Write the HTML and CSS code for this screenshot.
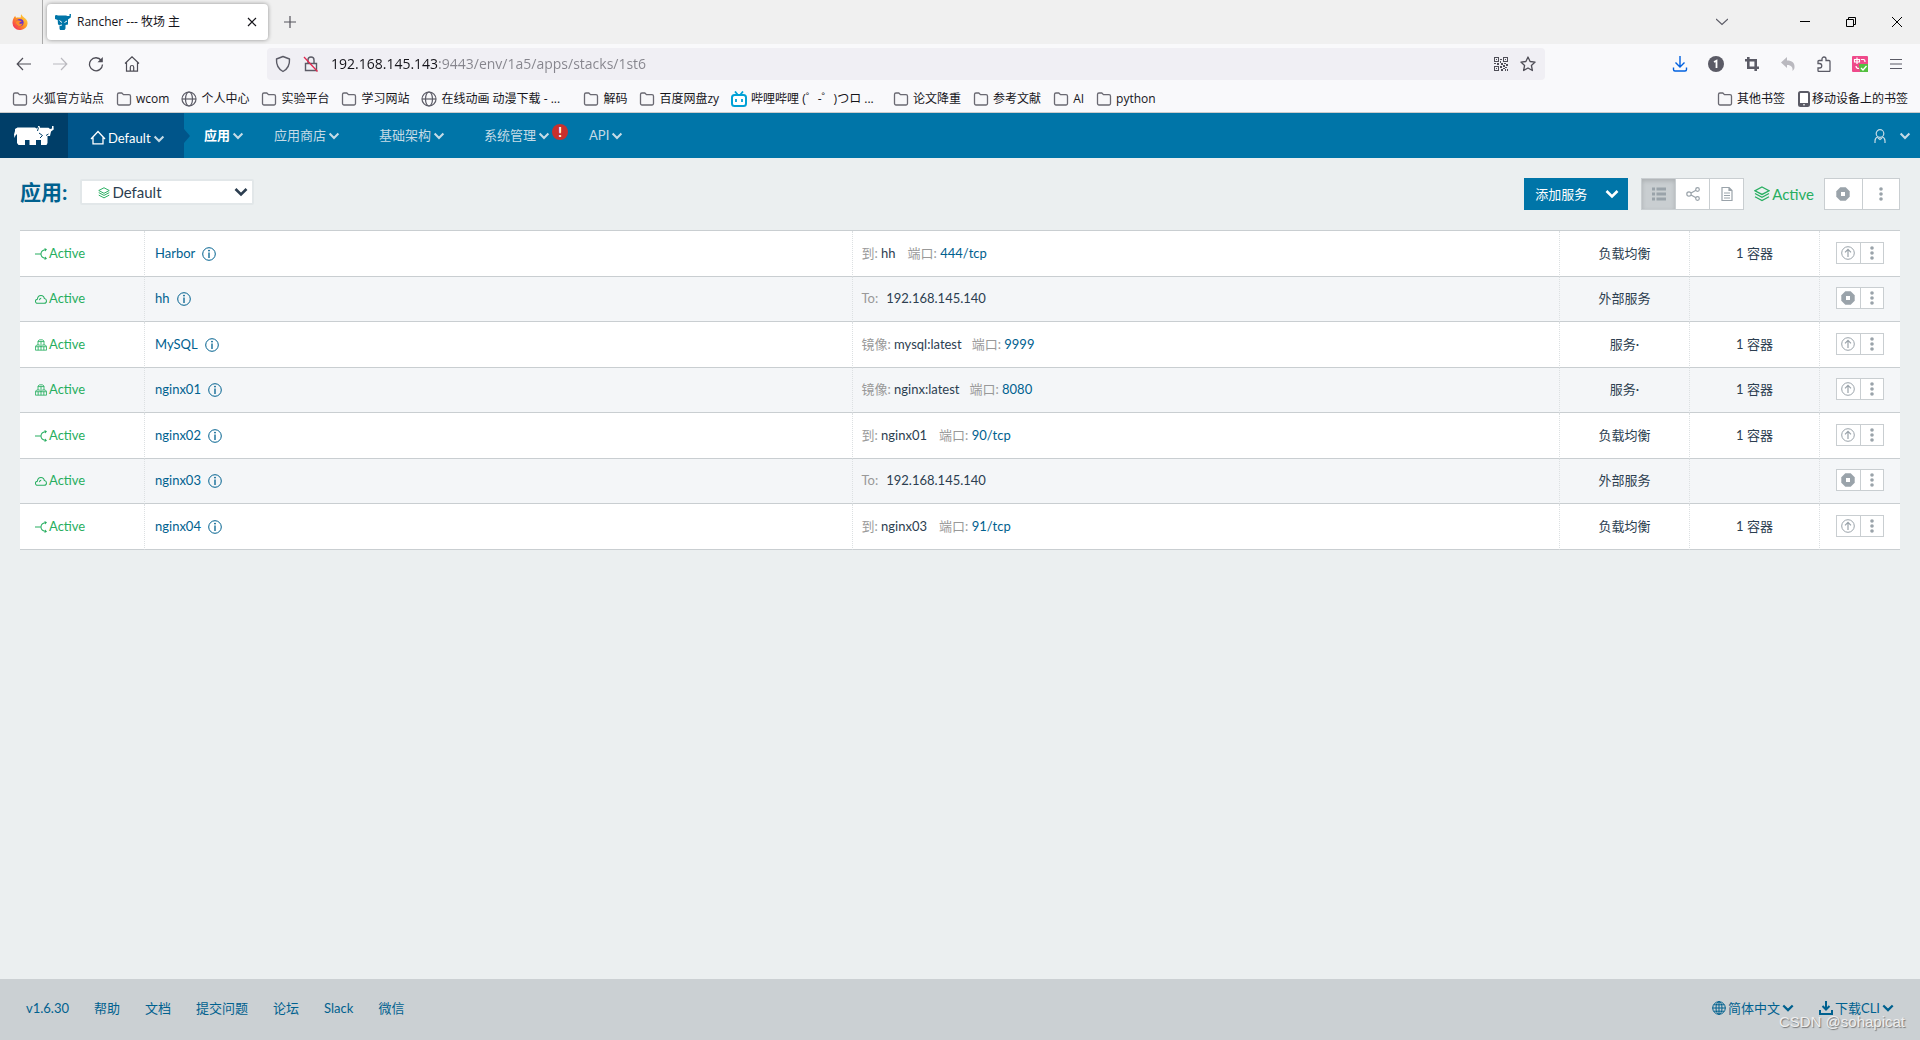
FILE: index.html
```html
<!DOCTYPE html>
<html lang="zh-CN">
<head>
<meta charset="utf-8">
<title>Rancher --- 牧场 主</title>
<link rel="stylesheet" href="styles.css">
</head>
<body>
<svg class="defs" aria-hidden="true">
  <symbol id="folder" viewBox="0 0 16 16"><path d="M1.5 12.5v-9a1.5 1.5 0 0 1 1.500-1.500h2.800l1.700 1.700h5.500a1.500 1.500 0 0 1 1.500 1.500v7.300a1.500 1.500 0 0 1-1.500 1.500h-10a1.500 1.500 0 0 1-1.500-1.500z" fill="#f7f7f9" stroke="#6a6972" stroke-width="1.300"/></symbol>
  <symbol id="globe" viewBox="0 0 16 16"><g fill="none" stroke="#5b5b66" stroke-width="1.200"><circle cx="8" cy="8" r="7"/><ellipse cx="8" cy="8" rx="3.500" ry="7"/><path d="M1 8h14"/></g></symbol>
  <symbol id="webglobe" viewBox="0 0 14 14"><g fill="none" stroke="currentColor"><circle cx="7" cy="7" r="6.300"/><ellipse cx="7" cy="7" rx="3" ry="6.300"/><path d="M.500 7h13M7 .500v13M1.800 3.800h10.400M1.800 10.200h10.400"/></g></symbol>
  <symbol id="chev" viewBox="0 0 14 10"><path d="M1.500 2l5.500 5.500L12.500 2" fill="none" stroke="currentColor" stroke-width="2.600"/></symbol>
  <symbol id="balancer" viewBox="0 0 14 14"><path d="M0 7h6.500M12 2C9 2.500 7 4.300 7 7s2 4.500 5 5" fill="none" stroke="currentColor" stroke-width="1.200"/><path d="M11 0l3 1.500-2 2.500zM11 14l3-1.500L12 10z" fill="currentColor"/></symbol>
  <symbol id="cloud" viewBox="0 0 14 14"><path d="M3 12a2.300 2.300 0 0 1-.3-4.600C3 4.800 4.600 2.800 7 2.800s3.600 1.600 3.900 3.700c1.500.2 2.500 1.300 2.500 2.800 0 1.600-1 2.700-2.600 2.700zM5.300 8.300a2 2 0 0 1 2-2.200" fill="none" stroke="currentColor" stroke-width="1.200"/></symbol>
  <symbol id="boxes" viewBox="0 0 14 14"><g fill="none" stroke="currentColor"><path d="M3.500 7V2.500L5 1h4l1.500 1.500V7M3.500 3h7M7 3v4"/><path d="M.500 13V8.500L2 7h3l2 1.500L9 7h3l1.500 1.500V13zM.500 9h13M7 8.500V13M3.700 9v4M10.300 9v4"/></g></symbol>
  <symbol id="layers" viewBox="0 0 16 16"><path d="M8 1l7 3.700-7 3.700-7-3.700zM1 7.500l7 3.700 7-3.700M1 10.800l7 3.700 7-3.700" fill="none" stroke="currentColor" stroke-width="1.300"/></symbol>
  <symbol id="info" viewBox="0 0 14 14"><circle cx="7" cy="7" r="6.300" fill="none" stroke="currentColor"/><path d="M7 5.500V11" fill="none" stroke="currentColor" stroke-width="1.300"/><circle cx="7" cy="3.600" r=".9" fill="currentColor"/></symbol>
  <symbol id="up" viewBox="0 0 14 14"><circle cx="7" cy="7" r="6.300" fill="none" stroke="currentColor"/><path d="M7 11V3.500M4 6.300l3-3 3 3" fill="none" stroke="currentColor" stroke-width="1.200"/></symbol>
  <symbol id="stop" viewBox="0 0 14 14"><path d="M4.300.3h5.400l4 4v5.400l-4 4H4.300l-4-4V4.300z" fill="currentColor"/><path d="M5 5h4v4H5z" fill="#fff"/></symbol>
  <symbol id="dots" viewBox="0 0 4 14"><g fill="currentColor"><circle cx="2" cy="2" r="1.800"/><circle cx="2" cy="7" r="1.800"/><circle cx="2" cy="12" r="1.800"/></g></symbol>
</svg>

<header class="browser">
  <div class="tabs">
    <div class="pin">
      <svg width="16" height="16" viewBox="0 0 16 16"><defs><linearGradient id="fx" x1="1" y1="0" x2="0" y2="1"><stop offset="0" stop-color="#ffe34a"/><stop offset=".5" stop-color="#ff9321"/><stop offset="1" stop-color="#f4136b"/></linearGradient></defs><path d="M9.500.2c.5 1.800 1.500 2.200 2.500 3.300 1.800 1.200 3.600 3 3.600 5.700A7.400 6.800 0 0 1 .5 9C.4 6.500 1.500 3.500 3.300 1.800c0 .9.300 1.500.9 2C5.700 3.300 8 3.500 9 3.200 8.600 2 8.700 1 9.500.2z" fill="url(#fx)"/><circle cx="7.900" cy="8.600" r="3.700" fill="#6a35c9"/><path d="M4.600 6.500c1.500-.6 2.500 0 3.500.2L9.700 7c-.4 1.200-2 1-2.600 2 .7 1.200 2.400 1 3.500.2-.3 2.400-2.700 3.600-4.700 2.600-1.900-.9-2.600-3.300-1.300-5.300z" fill="#ff8a2a"/></svg>
    </div>
    <div class="tab">
      <svg width="16" height="16" viewBox="0 0 16 16"><path d="M0 1.500L1.500 1 3 1.500h8l1.500.5L14.500 2V0H16l-.2 3.500L13 5.500v5l-2.500.5v3.500l-1 1.500H5l-.5-1.500V11L3 10.500 2.700 6 0 5z" fill="#0075a8"/><path d="M4.500 6.500l2.500 2M9.500 8.500L12 7M4.500 11.500L7 11" stroke="#fff" fill="none"/></svg>
      <span class="tab-title">Rancher --- 牧场 主</span>
      <button class="bare" aria-label="关闭"><svg width="10" height="10" viewBox="0 0 10 10"><path d="M1 1l8 8M9 1L1 9" stroke="#15141a" stroke-width="1.200"/></svg></button>
    </div>
    <button class="bare newtab" aria-label="新建标签页"><svg width="12" height="12" viewBox="0 0 12 12"><path d="M6 0v12M0 6h12" stroke="#55545c" stroke-width="1.200"/></svg></button>
    <div class="window">
      <button class="bare" aria-label="列出标签页"><svg width="12" height="12" viewBox="0 0 12 12"><path d="M0 3l6 5.500L12 3" fill="none" stroke="#5b5b66" stroke-width="1.200"/></svg></button>
      <button class="bare first" aria-label="最小化"><svg width="10" height="10" viewBox="0 0 10 10"><path d="M0 4.500h10" stroke="#000"/></svg></button>
      <button class="bare" aria-label="还原"><svg width="10" height="10" viewBox="0 0 10 10"><path d="M.500 2.500h7v7h-7zM2.500 2.500v-2h7v7h-2" fill="none" stroke="#000"/></svg></button>
      <button class="bare" aria-label="关闭窗口"><svg width="10" height="10" viewBox="0 0 10 10"><path d="M0 0l10 10M10 0L0 10" stroke="#000"/></svg></button>
    </div>
  </div>

  <div class="toolbar">
    <div class="nav">
      <button class="bare" aria-label="后退"><svg width="16" height="14" viewBox="0 0 16 14"><path d="M15 7H1.500M7 1L1.200 7 7 13" fill="none" stroke="#4f4e57" stroke-width="1.200"/></svg></button>
      <button class="bare" aria-label="前进"><svg width="16" height="14" viewBox="0 0 16 14"><path d="M1 7h13.500M9 1l5.800 6L9 13" fill="none" stroke="#bab9bf" stroke-width="1.200"/></svg></button>
      <button class="bare" aria-label="刷新"><svg width="16" height="16" viewBox="0 0 16 16"><path d="M13.300 4.500A6.500 6.500 0 1 0 14.500 8.500" fill="none" stroke="#4f4e57" stroke-width="1.300"/><path d="M14.800 1v5.200H9.500z" fill="#4f4e57"/></svg></button>
      <button class="bare" aria-label="主页"><svg width="16" height="16" viewBox="0 0 16 16"><path d="M1 7.500l7-6.700 7 6.700M2.500 6.500v8.700h11V6.500M6.300 15v-3.800a1.700 1.700 0 0 1 3.400 0V15" fill="none" stroke="#4f4e57" stroke-width="1.200"/></svg></button>
    </div>
    <div class="address">
      <svg width="16" height="18" viewBox="0 0 16 18"><path d="M8 1.500L14.500 4c.3 5-1.500 9.800-6.500 12.500C3 13.800 1.200 9 1.500 4z" fill="none" stroke="#5b5b66" stroke-width="1.400" stroke-linejoin="round"/></svg>
      <svg width="16" height="18" viewBox="0 0 16 18"><path d="M2.500 8.500h11v7h-11zM5 8.500V5a3 3 0 0 1 6 0v3.500" fill="none" stroke="#5b5b66" stroke-width="1.400"/><path d="M1 2l13.500 14.500" stroke="#e22850" stroke-width="1.300"/></svg>
      <input class="url" type="text" aria-label="地址" value="192.168.145.143:9443/env/1a5/apps/stacks/1st6">
      <svg width="14" height="14" viewBox="0 0 14 14" shape-rendering="crispEdges"><path d="M.500.500h4v4h-4zM9.500.500h4v4h-4zM.500 9.500h4v4h-4z" fill="none" stroke="#4f4e57"/><path d="M2 2h1v1H2zM11 2h1v1h-1zM2 11h1v1H2zM6 2h2v1H6zM6 4h1v2H6zM0 6h2v1H0zM3 6h2v2H3zM7 6h2v2H7zM10 6h2v1h-2zM12 7h2v2h-2zM9 8h2v2H9zM6 9h2v2H6zM11 10h2v1h-2zM9 11h2v1H9zM7 12h2v2H7zM11 12h1v2h-1zM13 12h1v2h-1z" fill="#4f4e57"/></svg>
      <svg width="16" height="16" viewBox="0 0 16 16"><path d="M8 1l2.100 4.500 5 .6-3.700 3.400 1 5L8 12l-4.400 2.500 1-5L.900 6.100l5-.6z" fill="none" stroke="#4f4e57" stroke-width="1.300" stroke-linejoin="round"/></svg>
    </div>
    <div class="tools">
      <button class="bare" aria-label="下载"><svg width="16" height="16" viewBox="0 0 16 16"><path d="M8 0v11M3.500 6.500L8 11l4.500-4.500M1.500 11.500v2a1.500 1.500 0 0 0 1.500 1.500h10a1.500 1.500 0 0 0 1.500-1.500v-2" fill="none" stroke="#0061e0" stroke-width="1.400"/></svg></button>
      <button class="bare" aria-label="密码"><svg width="16" height="16" viewBox="0 0 16 16"><circle cx="8" cy="8" r="8" fill="#5b5b66"/><path d="M6 6l2.500-1.300V12" fill="none" stroke="#fff" stroke-width="1.800"/></svg></button>
      <button class="bare" aria-label="截图"><svg width="16" height="16" viewBox="0 0 16 16"><path d="M4.300 1v10.700H15M1 4.300h10.700V15" fill="none" stroke="#5b5b66" stroke-width="2.600"/></svg></button>
      <button class="bare" aria-label="撤销"><svg width="16" height="16" viewBox="0 0 16 16"><path d="M1 6.500L7 1v3.500c5 0 8 2.500 7.500 7-.2 1.700-1 2.700-2 3.500.5-3.500-1-6-5.500-6V12z" fill="#bab9bf"/></svg></button>
      <button class="bare" aria-label="扩展"><svg width="16" height="16" viewBox="0 0 16 16"><path d="M2 7.500V5.500a1 1 0 0 1 1-1h3V3a2 2 0 0 1 4 0v1.500h3a1 1 0 0 1 1 1v9a1 1 0 0 1-1 1H3a1 1 0 0 1-1-1V12h1.500a2.200 2.200 0 0 0 0-4.500z" fill="none" stroke="#5b5b66" stroke-width="1.300"/></svg></button>
      <button class="bare" aria-label="翻译"><svg width="16" height="16" viewBox="0 0 16 16"><rect width="16" height="16" rx="1" fill="#ef4a8b"/><path d="M2.500 3.500h5v2.500h-5zM5 1.500V8M9 3.500h2.500q1.500 0 1.500 2.500M4 10q0 2.500 3 2.500" fill="none" stroke="#fff" stroke-width="1.200"/><path d="M7 8h9v8H8z" fill="#54c040"/><path d="M9 12l2 2 3.500-4" fill="none" stroke="#fff" stroke-width="1.300"/></svg></button>
      <button class="bare" aria-label="菜单"><svg width="16" height="16" viewBox="0 0 16 16"><path d="M2 3.500h12M2 8h12M2 12.500h12" stroke="#5b5b66" stroke-width="1.200"/></svg></button>
    </div>
  </div>

  <nav class="bookmarks" aria-label="书签">
    <a href="#"><svg width="16" height="16"><use href="#folder"/></svg>火狐官方站点</a>
    <a href="#"><svg width="16" height="16"><use href="#folder"/></svg>wcom</a>
    <a href="#"><svg width="16" height="16"><use href="#globe"/></svg>个人中心</a>
    <a href="#"><svg width="16" height="16"><use href="#folder"/></svg>实验平台</a>
    <a href="#"><svg width="16" height="16"><use href="#folder"/></svg>学习网站</a>
    <a href="#" class="wide"><svg width="16" height="16"><use href="#globe"/></svg>在线动画 动漫下载 - ...</a>
    <a href="#"><svg width="16" height="16"><use href="#folder"/></svg>解码</a>
    <a href="#"><svg width="16" height="16"><use href="#folder"/></svg>百度网盘zy</a>
    <a href="#" class="wide"><svg width="16" height="16" viewBox="0 0 16 16"><rect x="1" y="4" width="14" height="11" rx="2.500" fill="#fff" stroke="#00a1d6" stroke-width="2"/><path d="M4 .500L6.500 3.500M12 .500L9.500 3.500M5 8v3M11 8v3" stroke="#00a1d6" stroke-width="1.800"/></svg>哔哩哔哩 (゜-゜)つロ ...</a>
    <a href="#"><svg width="16" height="16"><use href="#folder"/></svg>论文降重</a>
    <a href="#"><svg width="16" height="16"><use href="#folder"/></svg>参考文献</a>
    <a href="#"><svg width="16" height="16"><use href="#folder"/></svg>AI</a>
    <a href="#"><svg width="16" height="16"><use href="#folder"/></svg>python</a>
    <a href="#" class="push"><svg width="16" height="16"><use href="#folder"/></svg>其他书签</a>
    <a href="#" class="tight"><svg width="12" height="16" viewBox="0 0 12 16"><rect x="1" y="1" width="10" height="14" rx="1.500" fill="#fff" stroke="#5b5b66" stroke-width="2"/><path d="M1 13.500h10" stroke="#5b5b66" stroke-width="3"/><path d="M5 13.800h2" stroke="#fff"/></svg>移动设备上的书签</a>
  </nav>
</header>

<nav class="appbar" aria-label="主导航">
  <a href="#" class="logo" aria-label="Rancher"><svg width="40" height="20" viewBox="0 0 40 20"><path d="M1 3L3.500 1.500H21l1.500 1L24 1.500V0h1.500l.5 1.800h8.500L36 3l2-.5V0h1.500l.2 3.500L37 5.500l-1 4.500h-2.500v7l-1 2H27v-5h-5v5h-6.500v-5H11v5H4.500L3 17V8L1.500 9.500.500 12 0 8.500l1-3.500z" fill="#fff"/><path d="M25 7l3.500 2.500L26 12M32 9.500l2.500-1.500M24.500 1.500L23.500 5" fill="none" stroke="#003e68"/></svg></a>
  <a href="#" class="env"><svg width="16" height="15" viewBox="0 0 16 15"><path d="M1 9L8 1.500 15 9M3 7.500v6.300h10V7.500" fill="none" stroke="currentColor" stroke-width="1.300"/></svg><span>Default</span><svg class="c" width="12" height="8"><use href="#chev"/></svg></a>
  <a href="#" class="item active">应用<svg class="c" width="12" height="8"><use href="#chev"/></svg></a>
  <a href="#" class="item">应用商店<svg class="c" width="12" height="8"><use href="#chev"/></svg></a>
  <a href="#" class="item">基础架构<svg class="c" width="12" height="8"><use href="#chev"/></svg></a>
  <a href="#" class="item">系统管理<svg class="c" width="12" height="8"><use href="#chev"/></svg><span class="alert">!</span></a>
  <a href="#" class="item">API<svg class="c" width="12" height="8"><use href="#chev"/></svg></a>
  <a href="#" class="user" aria-label="用户"><svg width="12" height="14" viewBox="0 0 12 14"><circle cx="6" cy="4.500" r="3.800" fill="none" stroke="currentColor" stroke-width="1.200"/><path d="M1 14v-2c0-2.500 1.500-3.700 3-4M11 14v-2c0-2.500-1.500-3.700-3-4M4 9l2 1.500L8 9" fill="none" stroke="currentColor" stroke-width="1.200"/></svg><svg width="12" height="8"><use href="#chev"/></svg></a>
</nav>

<main>
  <div class="head">
    <h1><label for="stack">应用:</label></h1>
    <div class="picker">
      <select id="stack"><option>Default</option></select>
      <svg class="lead" width="12" height="12"><use href="#layers"/></svg>
      <svg class="arrow" width="14" height="10"><use href="#chev"/></svg>
    </div>
    <div class="actions">
      <button class="add"><span>添加服务</span><svg width="14" height="10"><use href="#chev"/></svg></button>
      <div class="group view">
        <button class="on" aria-label="列表"><svg width="14" height="14" viewBox="0 0 14 14"><path d="M0 2h3M0 7h3M0 12h3M4.500 2H14M4.500 7H14M4.500 12H14" stroke="currentColor" stroke-width="2.800"/></svg></button>
        <button aria-label="图形"><svg width="14" height="14" viewBox="0 0 14 14"><g fill="none" stroke="currentColor" stroke-width="1.200"><circle cx="3" cy="7" r="2.200"/><circle cx="11.500" cy="2.500" r="1.800"/><circle cx="11.500" cy="11.500" r="1.800"/><path d="M5 6l5-2.700M5 8l5 2.700"/></g></svg></button>
        <button aria-label="配置"><svg width="14" height="14" viewBox="0 0 14 14"><path d="M2 .500h7l3 3v10H2zM9 .500v3h3M4 6h6M4 8.500h6M4 11h6" fill="none" stroke="currentColor" stroke-width="1.200"/></svg></button>
      </div>
      <span class="state"><svg width="16" height="16"><use href="#layers"/></svg>Active</span>
      <div class="group">
        <button aria-label="停止"><svg width="14" height="14"><use href="#stop"/></svg></button>
        <button aria-label="更多"><svg width="4" height="14"><use href="#dots"/></svg></button>
      </div>
    </div>
  </div>

  <table>
    <colgroup><col class="c-state"><col><col><col class="c-kind"><col class="c-kind"><col class="c-act"></colgroup>
    <tbody>
      <tr><td class="st"><svg width="12" height="12"><use href="#balancer"/></svg>Active</td><td><a href="#">Harbor<svg width="14" height="14"><use href="#info"/></svg></a></td><td><span class="pair"><i>到:</i> hh</span><span class="pair wide"><i>端口:</i> <a href="#">444/tcp</a></span></td><td class="mid">负载均衡</td><td class="mid">1 容器</td><td><div class="group small"><button aria-label="升级"><svg width="14" height="14"><use href="#up"/></svg></button><button aria-label="更多"><svg width="4" height="14"><use href="#dots"/></svg></button></div></td></tr>
      <tr><td class="st"><svg width="12" height="12"><use href="#cloud"/></svg>Active</td><td><a href="#">hh<svg width="14" height="14"><use href="#info"/></svg></a></td><td><i>To:</i><span class="ip">192.168.145.140</span></td><td class="mid">外部服务</td><td></td><td><div class="group small"><button aria-label="停止"><svg width="14" height="14"><use href="#stop"/></svg></button><button aria-label="更多"><svg width="4" height="14"><use href="#dots"/></svg></button></div></td></tr>
      <tr><td class="st"><svg width="12" height="12"><use href="#boxes"/></svg>Active</td><td><a href="#">MySQL<svg width="14" height="14"><use href="#info"/></svg></a></td><td><span class="pair"><i>镜像:</i> mysql:latest</span><span class="pair"><i>端口:</i> <a href="#">9999</a></span></td><td class="mid">服务·</td><td class="mid">1 容器</td><td><div class="group small"><button aria-label="升级"><svg width="14" height="14"><use href="#up"/></svg></button><button aria-label="更多"><svg width="4" height="14"><use href="#dots"/></svg></button></div></td></tr>
      <tr><td class="st"><svg width="12" height="12"><use href="#boxes"/></svg>Active</td><td><a href="#">nginx01<svg width="14" height="14"><use href="#info"/></svg></a></td><td><span class="pair"><i>镜像:</i> nginx:latest</span><span class="pair"><i>端口:</i> <a href="#">8080</a></span></td><td class="mid">服务·</td><td class="mid">1 容器</td><td><div class="group small"><button aria-label="升级"><svg width="14" height="14"><use href="#up"/></svg></button><button aria-label="更多"><svg width="4" height="14"><use href="#dots"/></svg></button></div></td></tr>
      <tr><td class="st"><svg width="12" height="12"><use href="#balancer"/></svg>Active</td><td><a href="#">nginx02<svg width="14" height="14"><use href="#info"/></svg></a></td><td><span class="pair"><i>到:</i> nginx01</span><span class="pair wide"><i>端口:</i> <a href="#">90/tcp</a></span></td><td class="mid">负载均衡</td><td class="mid">1 容器</td><td><div class="group small"><button aria-label="升级"><svg width="14" height="14"><use href="#up"/></svg></button><button aria-label="更多"><svg width="4" height="14"><use href="#dots"/></svg></button></div></td></tr>
      <tr><td class="st"><svg width="12" height="12"><use href="#cloud"/></svg>Active</td><td><a href="#">nginx03<svg width="14" height="14"><use href="#info"/></svg></a></td><td><i>To:</i><span class="ip">192.168.145.140</span></td><td class="mid">外部服务</td><td></td><td><div class="group small"><button aria-label="停止"><svg width="14" height="14"><use href="#stop"/></svg></button><button aria-label="更多"><svg width="4" height="14"><use href="#dots"/></svg></button></div></td></tr>
      <tr><td class="st"><svg width="12" height="12"><use href="#balancer"/></svg>Active</td><td><a href="#">nginx04<svg width="14" height="14"><use href="#info"/></svg></a></td><td><span class="pair"><i>到:</i> nginx03</span><span class="pair wide"><i>端口:</i> <a href="#">91/tcp</a></span></td><td class="mid">负载均衡</td><td class="mid">1 容器</td><td><div class="group small"><button aria-label="升级"><svg width="14" height="14"><use href="#up"/></svg></button><button aria-label="更多"><svg width="4" height="14"><use href="#dots"/></svg></button></div></td></tr>
    </tbody>
  </table>
</main>

<footer>
  <a href="#">v1.6.30</a><a href="#">帮助</a><a href="#">文档</a><a href="#">提交问题</a><a href="#">论坛</a><a href="#">Slack</a><a href="#">微信</a>
  <a href="#" class="push"><svg width="14" height="14"><use href="#webglobe"/></svg>简体中文<svg width="12" height="10"><use href="#chev"/></svg></a>
  <a href="#"><svg width="14" height="14" viewBox="0 0 14 14"><path d="M7 0v8M3.500 5L7 8.500 10.500 5M1 9v4h12V9" fill="none" stroke="currentColor" stroke-width="2"/></svg>下载CLI<svg width="12" height="10"><use href="#chev"/></svg></a>
  <span class="watermark">CSDN @sohapicat</span>
</footer>
</body>
</html>
```
FILE: styles.css
```css
* { box-sizing: border-box; }

body {
  margin: 0;
  min-height: 100vh;
  display: flex;
  flex-direction: column;
  background: #ebeff0;
  color: #2c3e50;
  font: 13px/20px Lato, "Noto Sans CJK SC", sans-serif;
}

svg { flex: none; display: block; }
.defs { position: absolute; width: 0; height: 0; }
a { color: #00618f; text-decoration: none; }
button { font: inherit; color: inherit; cursor: pointer; }
.bare { border: 0; padding: 0; background: none; display: flex; }

/* browser window */
.browser {
  background: #f9f9fb;
  border-bottom: 1px solid #ccc;
  color: #15141a;
  font: 12px/16px "Open Sans", "Noto Sans CJK SC", sans-serif;
}
.tabs { display: flex; align-items: center; height: 44px; background: #f0f0f0; }
.pin { width: 43px; height: 44px; padding: 14px 12px; border-right: 1px solid #aaa; }
.tab {
  display: flex;
  align-items: center;
  gap: 6px;
  width: 221px;
  height: 36px;
  margin-left: 4px;
  padding: 0 11px 0 8px;
  background: #fff;
  border-radius: 4px;
  box-shadow: 0 0 4px rgba(0, 0, 0, .4);
}
.tab-title { flex: 1; }
.newtab { margin-left: 16px; }
.window { display: flex; align-items: center; gap: 36px; margin-left: auto; padding-right: 18px; }
.window .first { margin-left: 36px; }

.toolbar { display: flex; align-items: center; height: 40px; }
.nav { display: flex; align-items: center; gap: 20px; width: 267px; padding-left: 16px; }
.address {
  display: flex;
  align-items: center;
  flex: 1;
  gap: 12px;
  height: 32px;
  padding: 0 9px 0 8px;
  border-radius: 4px;
  background: #f0eff4;
}
.url {
  flex: 1;
  min-width: 0;
  height: 24px;
  padding: 0 0 2px;
  border: 0;
  color: #15141a;
  font: 14px/22px "Open Sans", sans-serif;
  background: linear-gradient(90deg, #15141a 108px, #85848c 108px) text;
  -webkit-text-fill-color: transparent;
}
.tools { display: flex; align-items: center; justify-content: flex-end; gap: 20px; width: 375px; padding-right: 16px; }

.bookmarks { display: flex; align-items: center; gap: 12px; height: 28px; padding: 1px 12px 0; white-space: nowrap; }
.bookmarks a { display: flex; align-items: center; gap: 4px; color: #15141a; }
.bookmarks .tight { gap: 2px; margin-left: 1px; }
.bookmarks .wide { width: 150px; }
.push { margin-left: auto; }

/* application bar */
.appbar { display: flex; height: 45px; background: #0075a8; }
.appbar a { display: flex; align-items: center; color: #c5dbe6; }
.appbar .c { margin: 2px 0 0 2px; color: #c5dbe6; }
.appbar .logo { width: 68px; padding-left: 14px; background: #003e68; }
.appbar .env {
  position: relative;
  width: 116px;
  padding: 4px 0 0 22px;
  background: #00558a;
  color: #fff;
}
.env span { margin-left: 2px; }
.appbar .env::after {
  content: "";
  position: absolute;
  left: 100%;
  top: 16px;
  border: 7px solid transparent;
  border-left: 6px solid #00558a;
  border-right: 0;
}
.appbar .item { padding: 0 19px 2px 20px; }
.appbar .active { padding-right: 10px; color: #fff; font-weight: 700; }
.alert {
  width: 16px;
  height: 16px;
  margin: -6px -18px 0 2px;
  border-radius: 50%;
  background: #c9302c;
  color: #fff;
  font-weight: 900;
  line-height: 16px;
  text-align: center;
}
.appbar .user { gap: 13px; margin-left: auto; padding-right: 9px; }

/* page */
main { flex: 1; padding: 19px 20px 0; }
.head { display: flex; align-items: center; height: 30px; margin-bottom: 23px; }
h1 { margin: 0 13px 0 0; color: #00618f; font-size: 21px; line-height: 30px; font-weight: 700; }
.picker { position: relative; color: #2c3e50; }
.picker select {
  appearance: none;
  width: 174px;
  height: 26px;
  padding: 0 0 0 30px;
  border: 2px solid #e2e7e9;
  border-radius: 2px;
  background: #fff;
  color: inherit;
  font: 15px/20px Lato, sans-serif;
}
.picker svg { position: absolute; top: 8px; pointer-events: none; }
.picker .lead { left: 18px; color: #27ae60; }
.picker .arrow { right: 6px; }

.actions { display: flex; align-items: center; margin-left: auto; padding-top: 4px; }
.add {
  display: flex;
  align-items: center;
  gap: 18px;
  height: 32px;
  margin-right: 13px;
  padding: 0 9px 0 11px;
  border: 0;
  background: #0075a8;
  color: #fff;
}
.group { display: flex; width: 76px; height: 32px; border: 1px solid #c9ced1; background: #fff; }
.group button {
  flex: 1;
  display: flex;
  align-items: center;
  justify-content: center;
  padding: 0;
  border: 0;
  background: none;
  color: #9aa3aa;
}
.group button + button { border-left: 1px solid #c9ced1; }
.group .on { background: #c9ced1; box-shadow: inset 0 2px 4px rgba(0, 0, 0, .15); }
.view { width: 103px; }
.state { display: flex; align-items: center; gap: 2px; margin: 0 10px; color: #27ae60; font-size: 15px; }
.small { width: 48px; height: 22px; }

table { width: 100%; table-layout: fixed; border-collapse: separate; border-spacing: 0; border-top: 1px solid #c9ced1; }
.c-state { width: 125px; }
.c-kind { width: 130px; }
.c-act { width: 80px; }
tr { height: 46px; background: #fff; }
tr:nth-child(even) { height: 45px; background: #f4f6f8; }
td { padding: 0 9px 2px; border-bottom: 1px solid #c9ced1; border-right: 1px dotted #dce0e2; }
td:last-child { padding: 0 16px 2px; border-right: 0; }
td svg { display: inline-block; vertical-align: -3px; }
td a svg { margin-left: 7px; }
.st { padding-left: 15px; color: #27ae60; }
.st svg { margin-right: 2px; vertical-align: -2px; }
td:nth-child(2) { padding-left: 10px; }
.mid { text-align: center; }
td button svg { vertical-align: 0; }
i { color: #999; font-style: normal; }
.pair + .pair { margin-left: 10px; }
.pair + .wide { margin-left: 12px; }
.ip { margin-left: 8px; }

footer {
  position: relative;
  display: flex;
  align-items: center;
  gap: 25px;
  height: 61px;
  padding: 0 26px 3px;
  background: #cbd0d3;
}
footer a { display: flex; align-items: center; gap: 2px; }
.watermark {
  position: absolute;
  right: 15px;
  bottom: 8px;
  color: #eee;
  font: 15px/20px "Liberation Sans", Arial, sans-serif;
  text-shadow: 1px 1px 1px #777;
}
```
